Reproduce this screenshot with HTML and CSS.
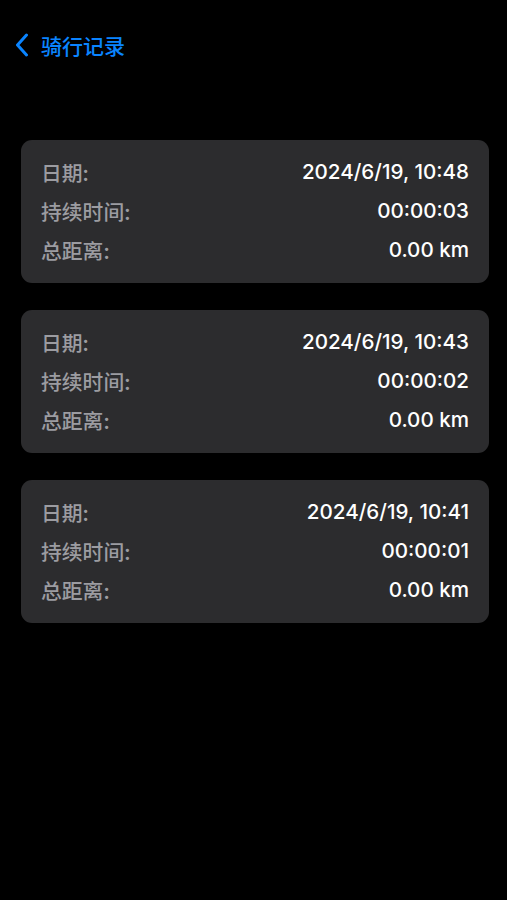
FILE: index.html
```html
<!DOCTYPE html>
<html lang="zh">

<head>
    <meta charset="UTF-8">
    <meta name="viewport" content="width=device-width, initial-scale=1.0">
    <title>骑行记录</title>
    <link rel="stylesheet" href="styles.css">
</head>

<body>
    <div class="nav">
        <a class="back" href="#">
            <svg class="chevron" width="14" height="24" viewBox="0 0 14 24">
                <path d="M11.5 2 L2.5 12 L11.5 22" fill="none" stroke="#0a84ff" stroke-width="3" stroke-linecap="round" stroke-linejoin="round"/>
            </svg>
            <span>骑行记录</span>
        </a>
    </div>

    <ul class="records">
        <li class="card">
            <div class="row"><span class="label">日期:</span><span class="value">2024/6/19, 10:48</span></div>
            <div class="row"><span class="label">持续时间:</span><span class="value">00:00:03</span></div>
            <div class="row"><span class="label">总距离:</span><span class="value">0.00 km</span></div>
        </li>
        <li class="card">
            <div class="row"><span class="label">日期:</span><span class="value">2024/6/19, 10:43</span></div>
            <div class="row"><span class="label">持续时间:</span><span class="value">00:00:02</span></div>
            <div class="row"><span class="label">总距离:</span><span class="value">0.00 km</span></div>
        </li>
        <li class="card">
            <div class="row"><span class="label">日期:</span><span class="value">2024/6/19, 10:41</span></div>
            <div class="row"><span class="label">持续时间:</span><span class="value">00:00:01</span></div>
            <div class="row"><span class="label">总距离:</span><span class="value">0.00 km</span></div>
        </li>
    </ul>
</body>

</html>
```

FILE: styles.css
```css
* {
    margin: 0;
    padding: 0;
    box-sizing: border-box;
}

li {
    list-style: none;
}

body {
    background-color: #000;
    font-family: Inter, "Noto Sans CJK SC", sans-serif;
    color: #fff;
}

.nav {
    display: flex;
    align-items: center;
    height: 90px;
    padding-left: 15px;
}

.back {
    display: flex;
    align-items: center;
    gap: 12px;
    color: #0a84ff;
    text-decoration: none;
    font-family: "Noto Sans CJK SC", sans-serif;
    font-size: 21px;
    font-weight: 500;
}

.records {
    display: flex;
    flex-direction: column;
    gap: 27px;
    padding: 50px 18px 0 21px;
}

.card {
    padding: 12px 20px 14px;
    background-color: #2c2c2e;
    border-radius: 11px;
}

.row {
    display: flex;
    justify-content: space-between;
    align-items: center;
    height: 39px;
}

.label {
    font-family: "Noto Sans CJK SC", sans-serif;
    font-size: 20.8px;
    font-weight: 500;
    color: #9c9ca1;
}

.value {
    font-size: 20.6px;
    font-weight: 500;
}
```
